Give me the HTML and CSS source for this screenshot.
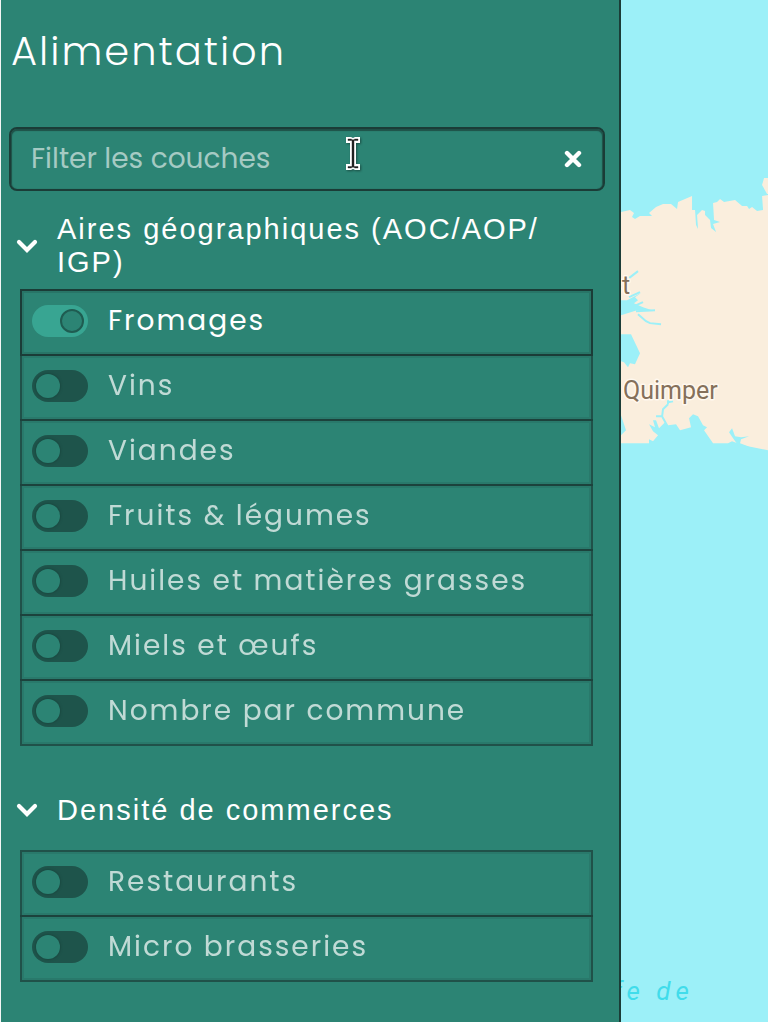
FILE: index.html
```html
<!DOCTYPE html>
<html lang="fr">
<head>
<meta charset="utf-8">
<meta name="viewport" content="width=device-width, initial-scale=1">
<title>Alimentation</title>
<link rel="stylesheet" href="styles.css">
</head>
<body>
<div class="app">
  <aside class="panel">
    <h1 class="title">Alimentation</h1>
    <div class="search">
      <input class="search-input" type="text" placeholder="Filter les couches" aria-label="Filter les couches">
      <button class="clear" type="button" aria-label="Effacer">
        <svg width="18" height="18" viewBox="0 0 18 18"><path d="M3 3L15 15M15 3L3 15" stroke="#fff" stroke-width="4.4" stroke-linecap="round"/></svg>
      </button>
      <svg class="cursor" width="16" height="36" viewBox="0 0 16 36" aria-hidden="true">
        <path d="M1 1H6L8 2L10 1H15V7H11V28H15V34H10L8 33L6 34H1V28H5V7H1Z" fill="#fff"/>
        <path d="M3 3H6L8 4L10 3H13V4.500H9V30.500H13V32H10L8 31L6 32H3V30.500H7V4.500H3Z" fill="#222" stroke="#222" stroke-width=".4"/>
      </svg>
    </div>

    <section class="group">
      <h2 class="group-heading"><button class="group-toggle" type="button" aria-expanded="true">
        <svg class="chevron" width="22" height="14" viewBox="0 0 22 14"><path d="M3 3L11 11L19 3" fill="none" stroke="#fff" stroke-width="4.2" stroke-linecap="round"/></svg>
        <span>Aires géographiques (AOC/AOP/<wbr>IGP)</span>
      </button></h2>
      <ul class="layers">
        <li><label class="layer"><input class="switch" type="checkbox" checked><span>Fromages</span></label></li>
        <li><label class="layer"><input class="switch" type="checkbox"><span>Vins</span></label></li>
        <li><label class="layer"><input class="switch" type="checkbox"><span>Viandes</span></label></li>
        <li><label class="layer"><input class="switch" type="checkbox"><span>Fruits &amp; légumes</span></label></li>
        <li><label class="layer"><input class="switch" type="checkbox"><span>Huiles et matières grasses</span></label></li>
        <li><label class="layer"><input class="switch" type="checkbox"><span>Miels et œufs</span></label></li>
        <li><label class="layer"><input class="switch" type="checkbox"><span>Nombre par commune</span></label></li>
      </ul>
    </section>

    <section class="group">
      <h2 class="group-heading"><button class="group-toggle" type="button" aria-expanded="true">
        <svg class="chevron" width="22" height="14" viewBox="0 0 22 14"><path d="M3 3L11 11L19 3" fill="none" stroke="#fff" stroke-width="4.2" stroke-linecap="round"/></svg>
        <span>Densité de commerces</span>
      </button></h2>
      <ul class="layers">
        <li><label class="layer"><input class="switch" type="checkbox"><span>Restaurants</span></label></li>
        <li><label class="layer"><input class="switch" type="checkbox"><span>Micro brasseries</span></label></li>
      </ul>
    </section>
  </aside>

  <main class="map">
    <svg class="map-canvas" viewBox="621 0 147 1022" preserveAspectRatio="xMinYMin slice" role="img" aria-label="Carte">
      <path class="land" d="M621 212L630 210L634 213L632 217L635 219L640 216H652L649 213L656 207L663 204H671L677 209L678 202L692 196V210H695L696 225L698 229L697 215L702 210L705 211V215L710 220L711 228L716 232L713 224L720 222L714 220L713 203L717 202L720 199L724 202L735 200L742 206H747L749 209L752 207L757 211L763 210L762 196L768 195V450L743 445L732 441L728 443H713L704 430L707 427L703 425L698 416L693 414L689 418L691 427L680 430L676 424L668 425L665 422L659 428L656 420L653 420L655 427L649 424L653 431L658 435L653 441L649 439V443H621V435L626 430L621 415V361L624 362L628 367L630 363L635 364L640 353L631 334H621V315L637 310L652 310L643 307L634 303L638 300L635 297L641 293L627 300L621 300Z"/>
      <path class="land" d="M768 178H764L762 185L767 194H768Z"/>
      <path class="water" d="M729 432L732 428L735 436L741 437L749 436L741 439L740 443L748 446L750 448L738 445L733 438Z"/>
      <path class="water-line" d="M629 278L638 271M629 297L640 292M634 306L643 302M636 311L655 310M638 314L646 321L650 323L661 324M668 404V400M668 402L673 401M668 404L663 409L662 417M656 416H662L667 425"/>
      <text class="city" x="609" y="294">st</text>
      <text class="city" x="623" y="399">Quimper</text>
      <text class="sea" x="613" y="1000">fe de</text>
    </svg>
  </main>
</div>
</body>
</html>
```
FILE: styles.css
```css
*,
*::before {
  box-sizing: border-box;
}

body {
  margin: 0;
  background: #9cf0f8;
  font-family: Poppins, Inter, "Open Sans", sans-serif;
  color: #fff;
}

.app {
  display: grid;
  grid-template-columns: minmax(0, 38fr) minmax(0, 9fr);
  min-height: 100vh;
}

.panel {
  background: #2c8474;
  border-left: 1px solid #f4f6f5;
  border-right: 2px solid #1b3c37;
  padding: 21px 14px 38px 8px;
}

.title {
  margin: 0 0 46px;
  padding-left: 2px;
  font-size: 40px;
  font-weight: 300;
  line-height: 60px;
  letter-spacing: 2px;
}

.search {
  position: relative;
  display: flex;
  align-items: center;
  height: 64px;
  padding: 0 21px 0 20px;
  border: 2px solid #1b3c37;
  border-radius: 8px;
  box-shadow: inset 0 1px 1px 1px #1f5048;
}

.search-input {
  flex: 1;
  min-width: 0;
  padding: 0;
  border: 0;
  outline: 0;
  background: none;
  color: #fff;
  font: 400 28px/40px Poppins, Inter, "Open Sans", sans-serif;
}

.search-input::placeholder {
  color: #a5cac3;
  opacity: 1;
}

.clear {
  display: flex;
  padding: 0;
  border: 0;
  background: none;
}

.cursor {
  position: absolute;
  left: 334px;
  top: 7px;
  filter: drop-shadow(1px 1px 1px rgba(0, 0, 0, 0.4));
}

.group {
  padding: 0 12px 0 11px;
  margin-top: 22px;
}

.group + .group {
  margin-top: 34px;
}

.group-heading {
  margin: 0 0 10px -4px;
}

.group-toggle {
  display: flex;
  align-items: center;
  gap: 19px;
  width: 100%;
  min-height: 60px;
  padding: 0;
  border: 0;
  background: none;
  color: #fff;
  font: 400 29px/33px "Liberation Sans", Arial, sans-serif;
  letter-spacing: 2px;
  text-align: left;
}

.chevron {
  flex: none;
}

.layers {
  margin: 0;
  padding: 0;
  list-style: none;
}

.layers li + li {
  margin-top: -2px;
}

.layer {
  display: flex;
  align-items: center;
  gap: 20px;
  padding: 14px 10px 17px;
  border: 2px solid #1b3c37;
  box-shadow: inset 0 0 0 2px rgba(27, 60, 55, 0.2);
  font-size: 28px;
  font-weight: 400;
  line-height: 32px;
  letter-spacing: 2px;
  opacity: 0.7;
}

.layer:has(:checked) {
  opacity: 1;
}

.switch {
  appearance: none;
  flex: none;
  display: flex;
  align-items: center;
  width: 56px;
  height: 32px;
  margin: 0;
  padding: 4px;
  border-radius: 16px;
  background: #19403a;
}

.switch::before {
  content: "";
  width: 24px;
  height: 24px;
  border-radius: 50%;
  background: #2c8474;
  box-shadow: 0 0 2px 1px #12312c;
}

.switch:checked {
  justify-content: flex-end;
  background: #38a592;
}

.switch:checked::before {
  border: 2px solid #1f5c51;
  box-shadow: none;
}

.map {
  position: relative;
  overflow: hidden;
  background: #9cf0f8;
}

.map-canvas {
  position: absolute;
  inset: 0;
  width: 100%;
  height: 100%;
}

.land {
  fill: #faeedd;
}

.water {
  fill: #9cf0f8;
}

.water-line {
  fill: none;
  stroke: #9cf0f8;
  stroke-width: 2;
}

.city {
  fill: #85705a;
  stroke: #fff8ee;
  stroke-width: 3px;
  stroke-linejoin: round;
  paint-order: stroke;
  font: 400 25px Roboto, sans-serif;
}

.sea {
  fill: #41dceb;
  font: italic 400 26px Roboto, sans-serif;
  letter-spacing: 5px;
}
```
